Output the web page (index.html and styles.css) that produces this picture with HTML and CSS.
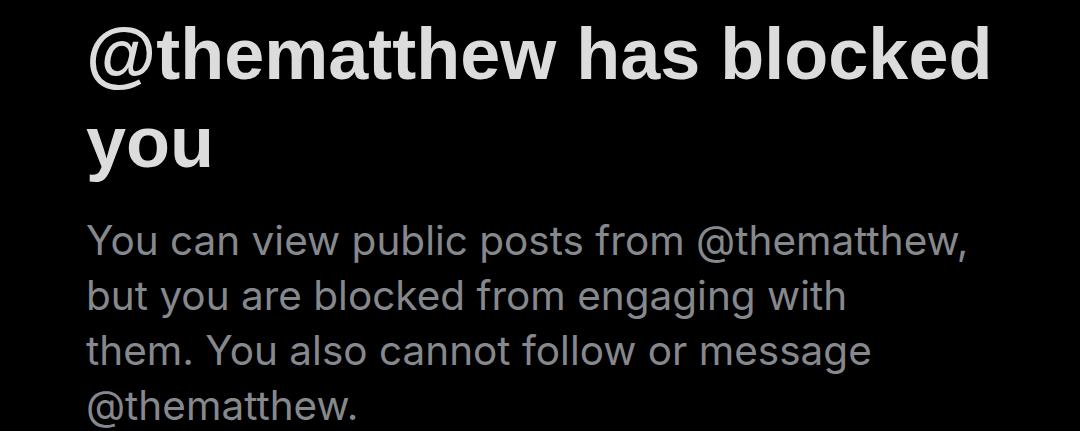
FILE: index.html
```html
<!DOCTYPE html>
<html lang="en">
<head>
  <meta charset="UTF-8" />
  <meta name="viewport" content="width=device-width, initial-scale=1.0" />
  <title>Blocked</title>
  <link rel="stylesheet" href="styles.css">
</head>
<body>
  <div class="container">
    <h1 class="blocked-title">@thematthew has blocked you</h1>
    <p class="blocked-note">You can view public posts from @thematthew,<br />
      but you are blocked from engaging with<br />
      them. You also cannot follow or message<br />
      @thematthew.</p>
  </div>
</body>
</html>
```

FILE: styles.css
```css
* {
  margin: 0;
  padding: 0;
  box-sizing: border-box;
}

body {
  font-family: Inter, 'Noto Sans', sans-serif;
  background: #000;
  color: #dcdcdc;
  overflow: hidden;
}

.container {
  padding: 10px 40px 0 86px;
}

.blocked-title {
  font-family: 'Liberation Sans', Arial, sans-serif;
  font-weight: 700;
  font-size: 72px;
  line-height: 88px;
  color: #dcdcdc;
  max-width: 940px;
}

.blocked-note {
  margin-top: 27px;
  font-size: 40.5px;
  line-height: 55px;
  color: #85888d;
}
```
